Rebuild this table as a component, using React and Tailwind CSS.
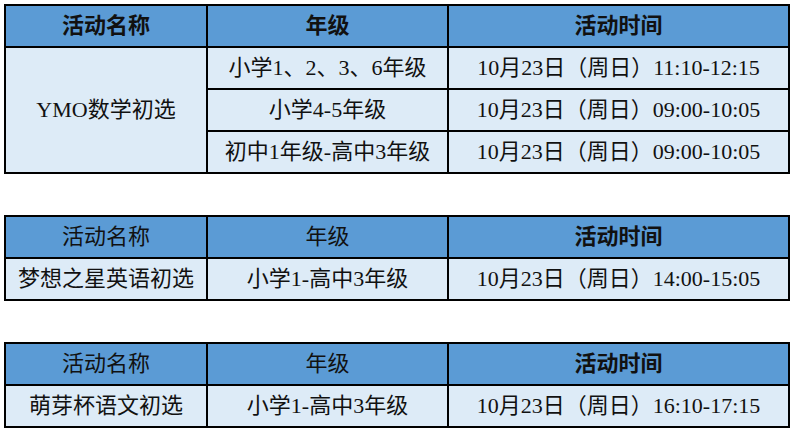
const font = { fontFamily: '"Liberation Serif", "Noto Sans CJK SC", serif' };

const tables = [
  {
    boldHead: true,
    name: 'YMO数学初选',
    rows: [
      ['小学1、2、3、6年级', '10月23日（周日）11:10-12:15'],
      ['小学4-5年级', '10月23日（周日）09:00-10:05'],
      ['初中1年级-高中3年级', '10月23日（周日）09:00-10:05'],
    ],
  },
  {
    boldHead: false,
    name: '梦想之星英语初选',
    rows: [['小学1-高中3年级', '10月23日（周日）14:00-15:05']],
  },
  {
    boldHead: false,
    name: '萌芽杯语文初选',
    rows: [['小学1-高中3年级', '10月23日（周日）16:10-17:15']],
  },
];

function Schedule({ t }) {
  const head = 'border-2 border-black bg-[#5b9bd5] h-[42px] text-center';
  const cell = 'border-2 border-black bg-[#ddebf7] h-[42px] text-center';
  return (
    <table className="table-fixed border-collapse w-[784px] text-[22px] text-[#111]">
      <colgroup>
        <col className="w-[202px]" />
        <col className="w-[241px]" />
        <col className="w-[341px]" />
      </colgroup>
      <thead>
        <tr>
          <th className={head + (t.boldHead ? ' font-bold' : ' font-normal')}>活动名称</th>
          <th className={head + (t.boldHead ? ' font-bold' : ' font-normal')}>年级</th>
          <th className={head + ' font-bold'}>活动时间</th>
        </tr>
      </thead>
      <tbody>
        {t.rows.map((r, i) => (
          <tr key={i}>
            {i === 0 && (
              <td rowSpan={t.rows.length} className={cell}>
                {t.name}
              </td>
            )}
            <td className={cell}>{r[0]}</td>
            <td className={cell}>{r[1]}</td>
          </tr>
        ))}
      </tbody>
    </table>
  );
}

export default function App() {
  return (
    <div className="w-[794px] h-[431px] bg-white pl-[4px] pt-[4px] flex flex-col gap-[41px] leading-none" style={font}>
      {tables.map((t, i) => (
        <Schedule key={i} t={t} />
      ))}
    </div>
  );
}
